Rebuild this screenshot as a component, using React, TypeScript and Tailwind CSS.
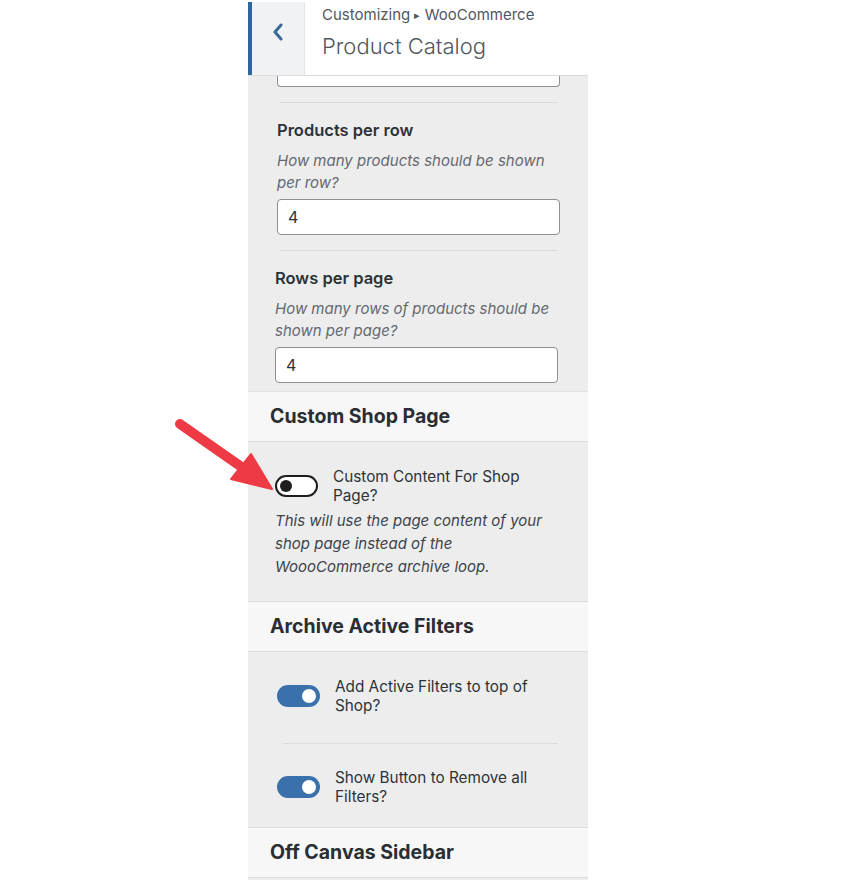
import React from 'react';

const font = { fontFamily: 'Inter, "Noto Sans", sans-serif' };

const Toggle = ({ on }: { on: boolean }) =>
    on ? (
        <div className="w-[43px] h-[22px] shrink-0 rounded-full bg-[#3a71ab] flex items-center justify-end pr-[4px]">
            <div className="w-[14px] h-[14px] rounded-full bg-white" />
        </div>
    ) : (
        <div className="w-[43px] h-[22px] shrink-0 rounded-full bg-white border-2 border-[#1e1e1e] flex items-center pl-[3px]">
            <div className="w-[12px] h-[12px] rounded-full bg-[#1e1e1e]" />
        </div>
    );

const SectionHeader = ({ title }: { title: string }) => (
    <div className="h-[50px] shrink-0 bg-[#f7f7f7] border-b border-[#dcdcde] flex items-center pl-[22px]">
        <span className="text-[19.5px] font-bold text-[#2a2e33] leading-none">{title}</span>
    </div>
);

const NumberField = ({ title, desc }: { title: string; desc: string }) => (
    <>
        <p className="mt-[17px] text-[16.5px] leading-[20px] font-semibold text-[#2c3338]">{title}</p>
        <p className="mt-[10px] text-[15px] leading-[22px] italic text-[#646970]">{desc}</p>
        <div className="mt-[5px] h-[36px] bg-white border border-[#8c8f94] rounded-[4px] flex items-center pl-[10px] text-[16px] text-[#2c3338]">
            4
        </div>
    </>
);

export default function App() {
    return (
        <div className="relative w-[863px] h-[880px] bg-white overflow-hidden" style={font}>
            <div className="ml-[248px] mt-[2px] w-[340px] h-[878px] bg-[#ededed] flex flex-col overflow-hidden">
                {/* header */}
                <div className="h-[74px] shrink-0 flex bg-white border-b border-[#dcdcde]">
                    <div className="w-[4px] bg-[#2e67a0]" />
                    <div className="w-[53px] bg-[#f1f2f4] border-r border-[#e2e4e7] flex items-center justify-center pb-[14px]">
                        <svg width="12" height="18" viewBox="0 0 12 18">
                            <polyline points="9,2 3,9 9,16" fill="none" stroke="#3a6a9c" strokeWidth="3" strokeLinejoin="round" strokeLinecap="round" />
                        </svg>
                    </div>
                    <div className="pl-[17px] pt-[3px]">
                        <p className="text-[15px] leading-[20px] text-[#50575e]">
                            Customizing <span className="text-[11px] align-[1px]">▸</span> WooCommerce
                        </p>
                        <p className="mt-[6px] text-[22px] leading-[30px] font-light text-[#50575e]">Product Catalog</p>
                    </div>
                </div>

                {/* catalog controls */}
                <div className="pl-[29px] pr-[28px]">
                    <div className="h-[11px] bg-white border border-t-0 border-[#8c8f94] rounded-b-[4px]" />
                    <div className="mt-[15px] mx-[2px] border-t border-[#dcdcde]" />
                    <NumberField title="Products per row" desc="How many products should be shown per row?" />
                    <div className="mt-[15px] mx-[2px] border-t border-[#dcdcde]" />
                    <div className="-ml-[2px] mr-[2px]">
                        <NumberField title="Rows per page" desc="How many rows of products should be shown per page?" />
                    </div>
                </div>

                <div className="mt-[8px] border-t border-[#e2e2e2]" />
                <SectionHeader title="Custom Shop Page" />
                <div className="pl-[27px] pr-[28px] pt-[25px] pb-[23px] border-b border-[#dcdcde]">
                    <div className="flex items-start gap-[15px]">
                        <div className="mt-[8px]">
                            <Toggle on={false} />
                        </div>
                        <p className="text-[15.3px] leading-[19px] text-[#2c3338]">Custom Content For Shop Page?</p>
                    </div>
                    <p className="mt-[4px] text-[15px] leading-[23px] italic text-[#3c434a]">
                        This will use the page content of your shop page instead of the WoooCommerce archive loop.
                    </p>
                </div>

                <SectionHeader title="Archive Active Filters" />
                <div className="pl-[29px] pr-[28px] pt-[25px] pb-[21px] border-b border-[#dcdcde]">
                    <div className="flex items-start gap-[15px]">
                        <div className="mt-[8px]">
                            <Toggle on />
                        </div>
                        <p className="text-[15.3px] leading-[19px] text-[#2c3338]">Add Active Filters to top of Shop?</p>
                    </div>
                    <div className="mt-[28px] ml-[6px] mr-[2px] border-t border-[#dcdcde]" />
                    <div className="mt-[24px] flex items-start gap-[15px]">
                        <div className="mt-[8px]">
                            <Toggle on />
                        </div>
                        <p className="text-[15.3px] leading-[19px] text-[#2c3338]">Show Button to Remove all Filters?</p>
                    </div>
                </div>

                <SectionHeader title="Off Canvas Sidebar" />
            </div>

            {/* annotation arrow */}
            <svg className="absolute left-0 top-0 pointer-events-none" width="863" height="880">
                <line x1="180" y1="424" x2="243" y2="468" stroke="#ee3a44" strokeWidth="10" strokeLinecap="round" />
                <polygon points="231,479 251,454 272,489" fill="#ee3a44" stroke="#ee3a44" strokeWidth="2" strokeLinejoin="round" />
            </svg>
        </div>
    );
}
